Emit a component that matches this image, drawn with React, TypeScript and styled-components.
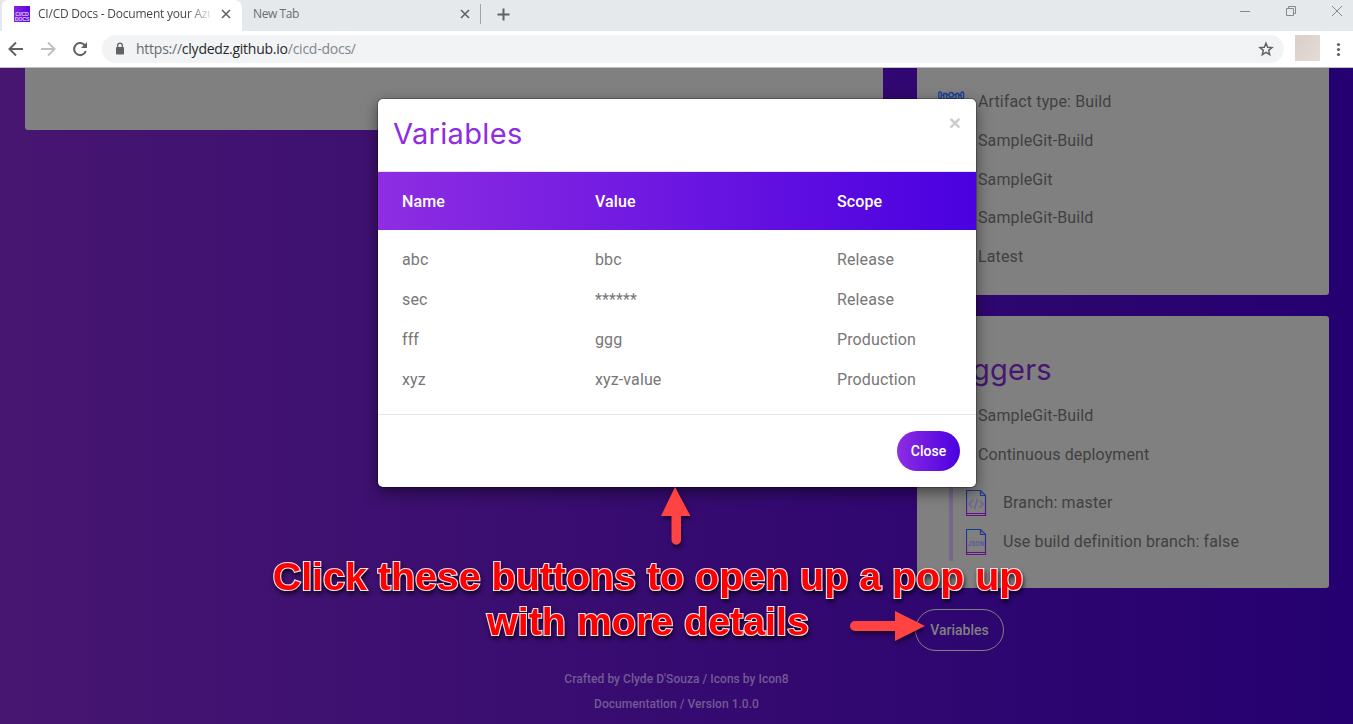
import React from 'react';
import styled, { createGlobalStyle } from 'styled-components';

const Global = createGlobalStyle`
  *, *::before, *::after { box-sizing: border-box; }
  html, body { margin: 0; padding: 0; }
  body { width: 1353px; height: 724px; overflow: hidden; font-family: Roboto, sans-serif; }
  button { font: inherit; border: 0; background: none; padding: 0; }
  h2, p { margin: 0; }
`;

const Window = styled.div`
  width: 1353px;
  height: 724px;
  display: flex;
  flex-direction: column;
  position: relative;
  overflow: hidden;
`;

const TabStrip = styled.div`
  height: 31px;
  flex: none;
  display: flex;
  background: #e5e9ec;
  font: 12px/28px "Open Sans", sans-serif;
`;

const Tab = styled.div<{ $active?: boolean; $width: number; $gap: number }>`
  width: ${p => p.$width}px;
  height: ${p => (p.$active ? 31 : 28)}px;
  padding: 0 ${p => (p.$active ? 8 : 7)}px 0 ${p => (p.$active ? 12 : 11)}px;
  display: flex;
  align-items: center;
  gap: ${p => p.$gap}px;
  color: ${p => (p.$active ? '#45494d' : '#6a6e73')};
  background: ${p => (p.$active ? '#fff' : 'transparent')};
  border-radius: ${p => (p.$active ? '6px 8px 0 0' : 0)};
  margin-left: ${p => (p.$active ? 2 : 0)}px;
  padding-bottom: ${p => (p.$active ? 3 : 0)}px;

  svg { flex: none; }
`;

const TabTitle = styled.span<{ $fade?: boolean; $spacing: number }>`
  flex: 1;
  min-width: 0;
  white-space: nowrap;
  letter-spacing: ${p => p.$spacing}px;
  -webkit-mask-image: ${p => (p.$fade ? 'linear-gradient(90deg,#000 150px,transparent 176px)' : 'none')};
`;

const Favicon = styled.span`
  width: 16px;
  height: 16px;
  flex: none;
  background: linear-gradient(90deg, #8622dd, #5a08df);
  color: #dcc3fa;
  font: bold 5.5px/5px "Liberation Sans", sans-serif;
  letter-spacing: -0.3px;
  padding-top: 6px;
  text-align: center;
  overflow: hidden;
`;

const TabDivider = styled.span`
  width: 1px;
  height: 20px;
  margin: 4px 16px 0 0;
  background: #a3a6a9;
`;

const PlusIcon = styled.svg`
  margin-top: 8px;
`;

const WindowControls = styled.div`
  margin-left: auto;
  padding: 5px 10px 0 0;
  display: flex;
  gap: 33px;
`;

const Toolbar = styled.div`
  height: 37px;
  flex: none;
  display: flex;
  align-items: center;
  padding: 0 10px 1px 8px;
  background: #fff;
  border-bottom: 1px solid #c0c0c0;
`;

const NavIcons = styled.div`
  display: flex;
  gap: 16px;
  margin-right: 14px;
`;

const AddressBar = styled.div`
  width: 1182px;
  height: 28px;
  border-radius: 14px;
  background: #f1f3f4;
  display: flex;
  align-items: center;
  padding: 0 10px 0 12px;
  font: 14px/28px "Open Sans", sans-serif;
  color: #80868b;
`;

const Url = styled.span`
  margin-left: 10px;
  flex: 1;
  letter-spacing: -0.24px;
  span { color: #26292c; }
  em { font-style: normal; color: #666b70; }
`;

const Avatar = styled.div`
  width: 25px;
  height: 26px;
  margin: -1px 14px 0 11px;
  background: linear-gradient(120deg, #d9cfca, #e6dcd5);
`;

const Page = styled.main`
  flex: 1;
  min-height: 0;
  display: flex;
  flex-direction: column;
  position: relative;
  background: linear-gradient(90deg, #471671, #250070);
`;

const Columns = styled.div`
  height: 583px;
  display: grid;
  grid-template-columns: 858px 412px;
  column-gap: 34px;
  padding-left: 25px;
`;

const Card = styled.section<{ $height: number; $first?: boolean }>`
  height: ${p => p.$height}px;
  background: #808080;
  border-radius: ${p => (p.$first ? '0 0 3px 3px' : '3px')};
  overflow: hidden;
`;

const Side = styled.div`
  display: flex;
  flex-direction: column;
  align-items: flex-start;
  > section { width: 100%; margin-bottom: 21px; }
`;

const Rows = styled.div<{ $top: number }>`
  padding: ${p => p.$top}px 0 0 21px;
`;

const Row = styled.div`
  height: 38.8px;
  display: flex;
  align-items: center;
  gap: 12px;
  font-size: 16px;
  letter-spacing: 0.12px;
  color: #404040;
  white-space: nowrap;
`;

const IconSlot = styled.span`
  width: 28px;
  height: 28px;
  flex: none;
`;

const SideTitle = styled.h2`
  padding: 34px 0 0 19px;
  height: 80px;
  font: 400 29px/40px Inter, sans-serif;
  letter-spacing: 0.2px;
  color: #471671;
`;

const Nested = styled.div`
  margin: 0 0 0 32px;
  padding: 9px 0 0 13px;
  height: 87px;
  border-left: 4px solid #76668a;
  ${Row} { gap: 16px; height: 39px; }
  ${Row} svg { flex: none; margin-top: 3px; }
`;

const PillOutline = styled.button`
  width: 89px;
  height: 42px;
  margin-left: -2px;
  border: 1px solid #808080;
  border-radius: 21px;
  color: #808080;
  font-size: 14px;
  font-weight: 500;
`;

const Footer = styled.footer`
  text-align: center;
  padding-top: 16px;
  font-size: 12px;
  line-height: 25px;
  font-weight: 500;
  letter-spacing: 0.04px;
  color: #735a94;
`;

const Dialog = styled.div`
  position: absolute;
  left: 378px;
  top: 99px;
  width: 598px;
  height: 388px;
  display: flex;
  flex-direction: column;
  background: #fff;
  border-radius: 5px;
  box-shadow: 0 0 0 1px rgba(0, 0, 0, 0.25), 0 5px 15px rgba(0, 0, 0, 0.5);
`;

const DialogHead = styled.div`
  height: 73px;
  flex: none;
  display: flex;
  justify-content: space-between;
  padding: 15px 15px 0;
  border-bottom: 1px solid #e5e5e5;
`;

const DialogTitle = styled.h2`
  font: 400 29px/40px Inter, sans-serif;
  letter-spacing: 0.35px;
  color: #8e2de2;
`;

const Dismiss = styled.button`
  height: 20px;
  margin-top: -1px;
  font: bold 21px/20px "Liberation Sans", sans-serif;
  color: #ccc;
`;

const TableRow = styled.div<{ $head?: boolean }>`
  display: grid;
  grid-template-columns: 193px 242px 1fr;
  align-items: center;
  padding-left: 24px;
  height: ${p => (p.$head ? 58 : 40)}px;
  margin-bottom: ${p => (p.$head ? 9 : 0)}px;
  font-size: 16px;
  letter-spacing: 0.12px;
  font-weight: ${p => (p.$head ? 500 : 400)};
  color: ${p => (p.$head ? '#fff' : '#777')};
  background: ${p => (p.$head ? 'linear-gradient(90deg, #8e2de2, #4a00e0)' : 'none')};
`;

const DialogFoot = styled.div`
  margin-top: auto;
  height: 73px;
  padding: 16px;
  border-top: 1px solid #e5e5e5;
  display: flex;
  justify-content: flex-end;
`;

const CloseButton = styled.button`
  width: 63px;
  height: 40px;
  border-radius: 20px;
  background: linear-gradient(90deg, #8e2de2, #4a00e0);
  color: #fff;
  font-size: 14px;
  font-weight: 500;
`;

const Callout = styled.p`
  position: absolute;
  left: 248px;
  top: 554px;
  width: 800px;
  text-align: center;
  font: bold 39.4px/45px "Liberation Sans", sans-serif;
  color: #f00;
  -webkit-text-stroke: 2.2px #f4e6ee;
  paint-order: stroke fill;
  filter: drop-shadow(1px 3px 2px rgba(0, 0, 0, 0.65));
  white-space: nowrap;
`;

const Arrow = styled.svg<{ $x: number; $y: number }>`
  position: absolute;
  left: ${p => p.$x}px;
  top: ${p => p.$y}px;
  overflow: visible;
  filter: drop-shadow(1px 3px 2px rgba(0, 0, 0, 0.5));
`;

const Cross = ({ size = 16, color = '#5f6368' }) => (
  <svg width={size} height={size} viewBox="0 0 16 16" stroke={color} strokeWidth="1.6">
    <path d="M4 4l8 8M12 4l-8 8" />
  </svg>
);

const FileIcon = ({ kind }: { kind: 'code' | 'json' }) => (
  <svg width="21" height="27" viewBox="0 0 21 27" fill="none">
    <defs>
      <linearGradient id={`file-${kind}`} x1="0" y1="0" x2="0" y2="27" gradientUnits="userSpaceOnUse">
        <stop offset="0" stopColor="#153e93" />
        <stop offset="1" stopColor="#6d0a86" />
      </linearGradient>
    </defs>
    <path d="M.5 .5H14.500L19.500 5.500V25.500H.5ZM14.500 .5V5.500H19.500M.5 23.500H19.500" stroke={`url(#file-${kind})`} strokeWidth="1.2" />
    {kind === 'code' ? (
      <path d="M6.500 10.500L3 14L6.500 17.500M13.500 10.500L17 14L13.500 17.500M11.500 9L8.500 19" stroke="#625f9b" strokeWidth="1.100" />
    ) : (
      <text x="10" y="16.500" textAnchor="middle" fontSize="6.500" fontWeight="700" fontFamily="Roboto, sans-serif" fill="#5c5896">JSON</text>
    )}
  </svg>
);

const DumbbellIcon = () => (
  <svg width="28" height="28" viewBox="0 0 28 28" fill="none" stroke="#203f98" strokeWidth="1.4">
    <rect x=".8" y="4" width="2.600" height="6.500" rx="1.300" />
    <rect x="23" y="4" width="2.600" height="6.500" rx="1.300" />
    <path d="M5.800 12V5.500H8.500V10.500H18V5.500H20.700V12M3.500 7.200H5.800M20.700 7.200H23" />
    <circle cx="13.200" cy="6.700" r="2.200" />
    <path d="M8.500 6.700h2.500M15.400 6.700h2.500" />
  </svg>
);

const variables = [
  ['abc', 'bbc', 'Release'],
  ['sec', '******', 'Release'],
  ['fff', 'ggg', 'Production'],
  ['xyz', 'xyz-value', 'Production'],
];

const artifacts = ['Artifact type: Build', 'SampleGit-Build', 'SampleGit', 'SampleGit-Build', 'Latest'];

export default function App() {
  return (
    <Window>
      <Global />
      <TabStrip>
        <Tab $active $width={240} $gap={8}>
          <Favicon>CI/CD<br />DOCS</Favicon>
          <TabTitle $fade $spacing={-0.22}>CI/CD Docs - Document your Azu</TabTitle>
          <Cross />
        </Tab>
        <Tab $width={238} $gap={4}>
          <TabTitle $spacing={-0.4}>New Tab</TabTitle>
          <Cross />
        </Tab>
        <TabDivider />
        <PlusIcon width="13" height="13" viewBox="0 0 13 13" stroke="#5f6368" strokeWidth="2">
          <path d="M6.5 .5v12M.5 6.5h12" />
        </PlusIcon>
        <WindowControls>
          <svg width="12" height="12" stroke="#888" fill="none"><path d="M1 6.5h10" /></svg>
          <svg width="14" height="12" stroke="#888" fill="none"><path d="M2.5 3.5h7v7h-7zM4.500 3.500V1.500h7v7h-2" /></svg>
          <svg width="12" height="12" stroke="#888" fill="none"><path d="M1 1l10 10M11 1L1 11" /></svg>
        </WindowControls>
      </TabStrip>
      <Toolbar>
        <NavIcons>
          <svg width="16" height="16" fill="none" stroke="#5f6368" strokeWidth="2"><path d="M15 8H2M8 1.500L1.500 8L8 14.500" /></svg>
          <svg width="16" height="16" fill="none" stroke="#bdc0c3" strokeWidth="2"><path d="M1 8h13M8 1.500L14.500 8L8 14.500" /></svg>
          <svg width="16" height="16" fill="none" stroke="#5f6368" strokeWidth="2">
            <path d="M13.800 10A6 6 0 1 1 12.300 3.800L14 5.500" /><path d="M15 1v6H9z" fill="#5f6368" stroke="none" />
          </svg>
        </NavIcons>
        <AddressBar>
          <svg width="12" height="14" viewBox="0 0 12 14" fill="none">
            <rect x="2" y="5" width="8" height="7.500" rx="1" fill="#5f6368" />
            <path d="M3.700 5V3.500a2.300 2.300 0 0 1 4.600 0V5" stroke="#5f6368" strokeWidth="1.300" />
          </svg>
          <Url><em>https://</em><span>clydedz.github.io</span>/cicd-docs/</Url>
          <svg width="16" height="16" viewBox="0 0 16 16" fill="none" stroke="#5f6368" strokeWidth="1.500">
            <path d="M8 2.200L9.700 6.200L14 6.600L10.700 9.400L11.700 13.700L8 11.400L4.300 13.700L5.300 9.400L2 6.600L6.300 6.200Z" />
          </svg>
        </AddressBar>
        <Avatar />
        <svg width="8" height="16" fill="#5f6368"><circle cx="4.500" cy="3.500" r="1.600" /><circle cx="4.500" cy="8.500" r="1.600" /><circle cx="4.500" cy="13.500" r="1.600" /></svg>
      </Toolbar>
      <Page>
        <Columns>
          <Card $height={62} $first />
          <Side>
            <Card $height={227} $first>
              <Rows $top={14.2}>
                {artifacts.map((label, i) => (
                  <Row key={i}>
                    <IconSlot>{i === 0 && <DumbbellIcon />}</IconSlot>
                    <span>{label}</span>
                  </Row>
                ))}
              </Rows>
            </Card>
            <Card $height={272}>
              <SideTitle>Triggers</SideTitle>
              <Rows $top={0}>
                <Row><IconSlot /><span>SampleGit-Build</span></Row>
                <Row><IconSlot /><span>Continuous deployment</span></Row>
              </Rows>
              <Nested>
                <Row><FileIcon kind="code" />Branch: master</Row>
                <Row><FileIcon kind="json" />Use build definition branch: false</Row>
              </Nested>
            </Card>
            <PillOutline>Variables</PillOutline>
          </Side>
        </Columns>
        <Footer>
          <p>Crafted by Clyde D'Souza / Icons by Icon8</p>
          <p>Documentation / Version 1.0.0</p>
        </Footer>
      </Page>
      <Dialog>
        <DialogHead>
          <DialogTitle>Variables</DialogTitle>
          <Dismiss>×</Dismiss>
        </DialogHead>
        <TableRow $head><span>Name</span><span>Value</span><span>Scope</span></TableRow>
        {variables.map(([name, value, scope]) => (
          <TableRow key={name}><span>{name}</span><span>{value}</span><span>{scope}</span></TableRow>
        ))}
        <DialogFoot><CloseButton>Close</CloseButton></DialogFoot>
      </Dialog>
      <Arrow $x={661} $y={487} width="30" height="59">
        <path d="M14 0L29.500 29H20V53a4.700 4.700 0 0 1-9.500 0V29H0Z" fill="#ff4242" />
      </Arrow>
      <Arrow $x={850} $y={611} width="75" height="30">
        <path d="M5 10H45V0L75 15L45 30V20H5a5 5 0 0 1 0-10Z" fill="#ff4242" />
      </Arrow>
      <Callout>Click these buttons to open up a pop up<br />with more details</Callout>
    </Window>
  );
}
